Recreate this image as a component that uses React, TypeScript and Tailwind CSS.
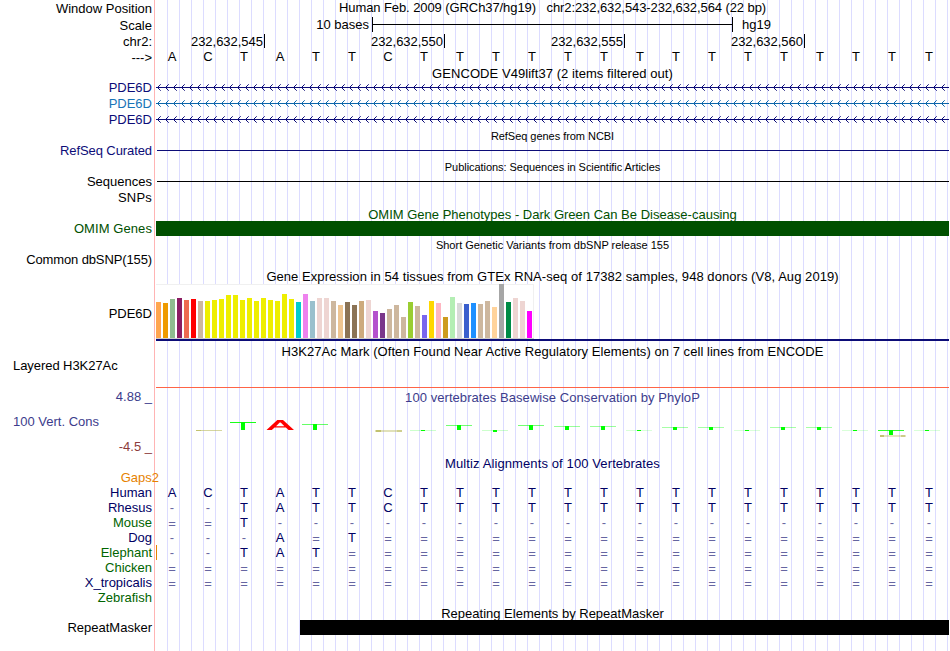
import { ReactNode } from "react"
import clsx from "clsx"

const REFERENCE = "ACTATTCTTTTTTTTTTTTTTT";

const SPECIES = [
    { name: "Human", color: "text-[#000064]", bases: REFERENCE },
    { name: "Rhesus", color: "text-[#000064]", bases: "--TATTCTTTTTTTTTTTTTTT" },
    { name: "Mouse", color: "text-[#006400]", bases: "==T-------------------" },
    { name: "Dog", color: "text-[#000064]", bases: "---A=T================" },
    { name: "Elephant", color: "text-[#006400]", bases: "--TAT=================", gap: true },
    { name: "Chicken", color: "text-[#006400]", bases: "======================" },
    { name: "X_tropicalis", color: "text-[#000064]", bases: "======================" },
    { name: "Zebrafish", color: "text-[#006400]", bases: "" },
];

// [color, median expression in px]
const TISSUES: [string, number][] = [
    ["#ffa54f", 36], ["#ee9a00", 35], ["#8fbc8f", 39], ["#8b1c62", 40], ["#ee6a50", 38], ["#ff0000", 39],
    ["#cdb79e", 37], ["#eeee00", 37], ["#eeee00", 38], ["#eeee00", 39], ["#eeee00", 43], ["#eeee00", 43],
    ["#eeee00", 38], ["#eeee00", 40], ["#eeee00", 37], ["#eeee00", 40], ["#eeee00", 38], ["#eeee00", 37],
    ["#eeee00", 44], ["#eeee00", 39], ["#00cdcd", 36], ["#ee82ee", 44], ["#9ac0cd", 37], ["#eed5d2", 40],
    ["#eed5d2", 40], ["#cdb79e", 37], ["#eec591", 33], ["#8b7355", 36], ["#8b7355", 33], ["#cdaa7d", 37],
    ["#eed5d2", 38], ["#b452cd", 27], ["#7a378b", 25], ["#cdb79e", 29], ["#cdb79e", 33], ["#cdb79e", 21],
    ["#9acd32", 36], ["#cdb79e", 32], ["#7a67ee", 23], ["#ffd700", 37], ["#ffb6c1", 35], ["#cd9b1d", 21],
    ["#b4eeb4", 41], ["#d9d9d9", 35], ["#3a5fcd", 34], ["#1e90ff", 35], ["#cdb79e", 34], ["#cdb79e", 37],
    ["#ffd39b", 31], ["#a6a6a6", 54], ["#008b45", 36], ["#eed5d2", 40], ["#eed5d2", 37], ["#ff00ff", 27],
];

// conserved T columns: base index, top, stem height, bar opacity
const LOGO: [number, number, number, number][] = [
    [2, 34, 8, 0.9], [4, 36, 6, 0.6], [7, 42, 1, 0.2], [8, 37, 5, 0.55], [9, 42, 2, 0.2], [10, 37, 5, 0.55],
    [11, 38, 4, 0.4], [12, 38, 4, 0.4], [13, 42, 1, 0.15], [14, 39, 3, 0.35], [15, 39, 3, 0.35],
    [16, 42, 1, 0.15], [17, 39, 3, 0.35], [18, 39, 3, 0.35], [19, 42, 1, 0.15], [20, 42, 5, 0.8], [21, 42, 1, 0.15],
];

const ARROWS = Array.from({ length: 99 }, (_, i) => i * 8 + 1);

function Row({ height, label, labelClass, children }: { height: string, label?: ReactNode, labelClass?: string, children?: ReactNode }) {
    return (
        <div className={clsx("flex", height)}>
            <div className={clsx("z-10 w-[155px] shrink-0 border-r border-[#ffb4b4] bg-white pr-0.5 text-right shadow-[1px_0_0_#fff]", labelClass)}>{label}</div>
            <div className="ml-px w-[793px] shrink-0">{children}</div>
        </div>
    )
}

function Title({ className, children }: { className?: string, children: ReactNode }) {
    return <div className={clsx("text-center", className)}>{children}</div>
}

function Bases({ bases, color }: { bases: string, color: string }) {
    return (
        <div className="-ml-0.5 flex w-[793px]">
            {bases.split("").map((base, i) => (
                <span
                    key={i}
                    className={clsx("w-9 shrink-0 text-center last:w-[38px]", color, base === "-" && "opacity-60", base === "=" && "pt-px opacity-60")}
                >
                    {base}
                </span>
            ))}
        </div>
    )
}

function Gene({ color, labelClass }: { color: string, labelClass: string }) {
    return (
        <Row height="h-4" label="PDE6D" labelClass={labelClass}>
            <svg width="793" height="16" shapeRendering="crispEdges" className="block">
                <rect x="0" y="7" width="793" height="1" fill={color} />
                {ARROWS.map((x) => (
                    <g key={x} fill={color}>
                        <rect x={x + 1} y="6" width="1" height="3" />
                        <rect x={x + 2} y="5" width="1" height="1" />
                        <rect x={x + 2} y="9" width="1" height="1" />
                        <rect x={x + 3} y="4" width="1" height="1" opacity="0.7" />
                        <rect x={x + 3} y="10" width="1" height="1" opacity="0.7" />
                    </g>
                ))}
            </svg>
        </Row>
    )
}

function Position({ children }: { children: ReactNode }) {
    return (
        <div className="flex h-3.5 w-[180px] shrink-0 justify-end border-r border-black pr-px tracking-[-0.02px]">{children}</div>
    )
}

function Expression() {
    return (
        <div className="flex h-[57px] flex-col">
            <div className="flex h-[55px] w-[378px] items-end gap-0.5 border-b border-[#cccccc] bg-white shadow-[inset_-1px_1px_0_#f0f0f0]">
                {TISSUES.map(([color, height], i) => (
                    <div key={i} className="w-[5px] shrink-0" style={{ height, backgroundColor: color }} />
                ))}
            </div>
            <div className="h-0.5 bg-[#0c0c78]" />
        </div>
    )
}

function Conservation() {
    return (
        <svg width="793" height="51" shapeRendering="crispEdges" className="block">
            <g transform="translate(0 -17)">
                {LOGO.map(([index, top, height, opacity]) => (
                    <g key={index} fill="#00ff00">
                        <rect x={index * 36 + 2} y={top} width="26" height="1" opacity={opacity} />
                        <rect x={index * 36 + 13} y={top} width="4" height={height} />
                    </g>
                ))}
                <path d="M110.5 42 L121.3 32 H127 L138 42 H132.6 L129.8 39.4 H118.6 L115.8 42 Z M120 38.2 H128.4 L124.7 34.4 H123.7 Z" fill="#ff0000" fillRule="evenodd" shapeRendering="auto" />
                <g fill="#b4b450">
                    <rect x="40" y="42" width="26" height="1" opacity="0.55" />
                    <rect x="40" y="42" width="5" height="1" opacity="0.6" />
                    <rect x="219" y="42" width="27" height="2" opacity="0.4" />
                    <rect x="220" y="42" width="5" height="2" opacity="0.7" />
                    <rect x="241" y="42" width="5" height="2" opacity="0.4" />
                    <rect x="724" y="47" width="26" height="2" opacity="0.35" />
                    <rect x="724" y="47" width="4" height="2" opacity="0.7" />
                    <rect x="745" y="47" width="4" height="2" opacity="0.5" />
                </g>
            </g>
        </svg>
    )
}

export default function App() {
    return (
        <div className="h-[651px] w-[950px] overflow-hidden bg-white bg-[repeating-linear-gradient(to_right,transparent_0px,transparent_11px,#dcdcff_11px,#dcdcff_12px)] font-['Liberation_Sans',Arial,sans-serif] text-[13px] leading-[15px] whitespace-pre text-black">
            <Row height="h-[15px]" label="Window Position" labelClass="pt-px">
                <Title className="tracking-[-0.085px]">{"Human Feb. 2009 (GRCh37/hg19)   chr2:232,632,543-232,632,564 (22 bp)"}</Title>
            </Row>
            <Row height="h-[19px]" label="Scale" labelClass="pt-[3px]">
                <div className="flex pt-0.5">
                    <div className="w-[213px] text-right">10 bases</div>
                    <div className="ml-[3px] flex h-[15px] w-[361px] items-center border-x border-black">
                        <div className="h-px w-full bg-black" />
                    </div>
                    <div className="ml-[9px]">hg19</div>
                </div>
            </Row>
            <Row height="h-[15px]" label="chr2:">
                <div className="-ml-[71px] flex">
                    <Position>232,632,545</Position>
                    <Position>232,632,550</Position>
                    <Position>232,632,555</Position>
                    <Position>232,632,560</Position>
                </div>
            </Row>
            <Row height="h-4" label="--->" labelClass="pt-px">
                <Bases bases={REFERENCE} color="text-black" />
            </Row>
            <Row height="h-[15px]">
                <Title className="pt-px tracking-[0.06px]">GENCODE V49lift37 (2 items filtered out)</Title>
            </Row>
            <Gene color="#0c0c78" labelClass="text-[#0c0c78]" />
            <Gene color="#0c66aa" labelClass="text-[#1874b8]" />
            <Gene color="#0c0c78" labelClass="text-[#0c0c78]" />

            <Row height="h-[15px]">
                <Title className="pt-0.5 text-[11px] leading-3 tracking-[-0.04px]">RefSeq genes from NCBI</Title>
            </Row>
            <Row height="h-4" label="RefSeq Curated" labelClass="text-[#0c0c78] tracking-[-0.09px]">
                <div className="mt-[7px] ml-px h-px bg-[#0c0c78]" />
            </Row>
            <Row height="h-[15px]">
                <Title className="pt-0.5 text-[11px] leading-3 tracking-[-0.05px]">Publications: Sequences in Scientific Articles</Title>
            </Row>
            <Row height="h-4" label="Sequences">
                <div className="mt-[7px] ml-px h-px bg-black" />
            </Row>
            <Row height="h-4" label="SNPs" labelClass="tracking-[0.2px]" />

            <Row height="h-[15px]">
                <Title className="pt-px text-[#005000]">OMIM Gene Phenotypes - Dark Green Can Be Disease-causing</Title>
            </Row>
            <Row height="h-[15px]" label="OMIM Genes" labelClass="text-[#005000] tracking-[0.08px]">
                <div className="relative h-full bg-[#005000]" />
            </Row>
            <Row height="h-4">
                <Title className="pt-[3px] text-[11px] leading-3">Short Genetic Variants from dbSNP release 155</Title>
            </Row>
            <Row height="h-4" label="Common dbSNP(155)" labelClass="tracking-[-0.12px]" />

            <Row height="h-4">
                <Title className="pt-px tracking-[0.055px]">Gene Expression in 54 tissues from GTEx RNA-seq of 17382 samples, 948 donors (V8, Aug 2019)</Title>
            </Row>
            <Row height="h-[57px]" label="PDE6D" labelClass="pt-[22px]">
                <Expression />
            </Row>

            <Row height="h-[17px]">
                <Title className="pt-[3px] tracking-[0.05px]">H3K27Ac Mark (Often Found Near Active Regulatory Elements) on 7 cell lines from ENCODE</Title>
            </Row>
            <Row height="h-[30px]" label="Layered H3K27Ac" labelClass="pl-[13px] !text-left tracking-[-0.06px]">
                <div className="h-full border-b border-[#ff6446]" />
            </Row>

            <Row
                height="h-[68px]"
                labelClass="flex flex-col justify-between pt-px pb-0.5 text-[#3c3c8c]"
                label={
                    <>
                        <div>4.88 _</div>
                        <div className="pl-[13px] text-left">100 Vert. Cons</div>
                        <div className="text-[#8c3c3c]">-4.5 _</div>
                    </>
                }
            >
                <Title className="pt-0.5 tracking-[0.06px] text-[#3c3c8c]">100 vertebrates Basewise Conservation by PhyloP</Title>
                <Conservation />
            </Row>

            <Row height="h-3.5">
                <Title className="tracking-[0.11px] text-[#000064]">Multiz Alignments of 100 Vertebrates</Title>
            </Row>
            <Row height="h-[15px]" label={<span className="-mr-[7px]">Gaps2</span>} labelClass="text-[#e68200]" />
            {SPECIES.map(({ name, color, bases, gap }) => (
                <Row key={name} height="h-[15px]" label={name} labelClass={color}>
                    <div className={clsx("h-full", gap && "shadow-[inset_1px_0_0_#e68200]")}>
                        <Bases bases={bases} color="text-[#000064]" />
                    </div>
                </Row>
            ))}

            <Row height="h-[15px]">
                <Title className="pt-px">Repeating Elements by RepeatMasker</Title>
            </Row>
            <Row height="h-[15px]" label="RepeatMasker">
                <div className="relative ml-36 h-full bg-black" />
            </Row>
            <Row height="h-4" />
        </div>
    )
}
